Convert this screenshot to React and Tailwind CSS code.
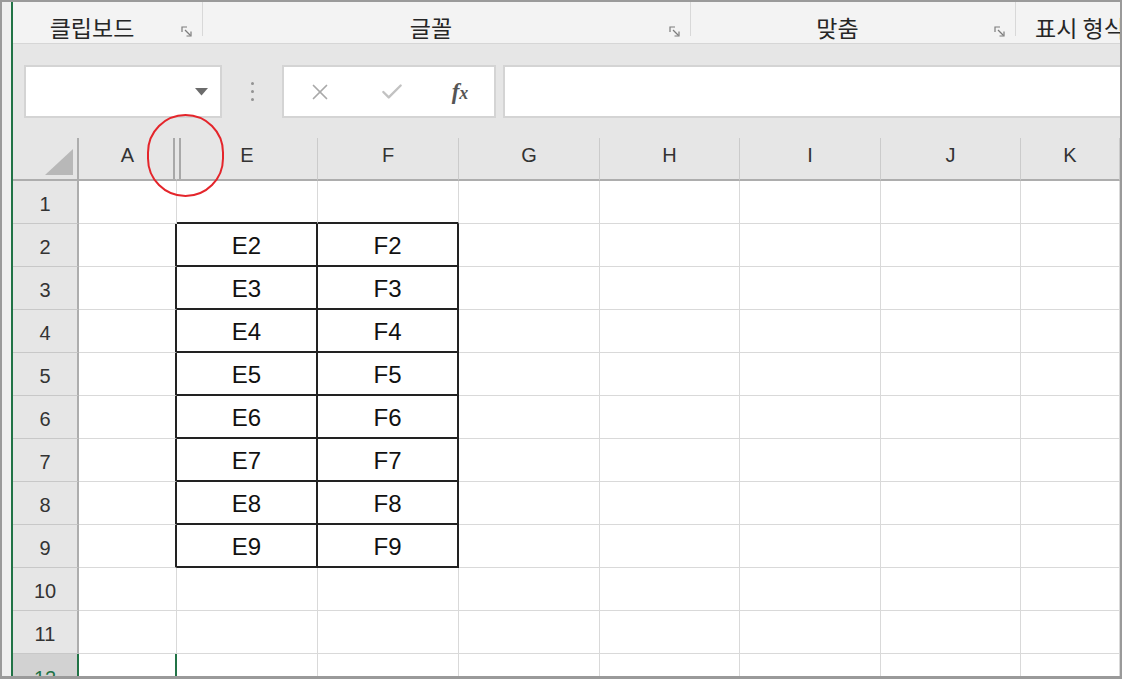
import React from 'react';
import { X, Check } from 'lucide-react';

const cols = [
  { key: 'A', label: 'A' },
  { key: 'E', label: 'E' },
  { key: 'F', label: 'F' },
  { key: 'G', label: 'G' },
  { key: 'H', label: 'H' },
  { key: 'I', label: 'I' },
  { key: 'J', label: 'J' },
  { key: 'K', label: 'K' },
];

const rows = [1, 2, 3, 4, 5, 6, 7, 8, 9, 10, 11, 12];

const gridCols = 'grid-cols-[66px_98px_141px_141px_141px_140px_141px_140px_1fr]';

function Launcher() {
  return (
    <svg width="11" height="11" viewBox="0 0 11 11" fill="none" stroke="#7c7c7c" strokeWidth="1.2">
      <path d="M1 6V1h5" />
      <path d="M4 4l5.5 5.5" />
      <path d="M10 5.5V10H5.5" />
    </svg>
  );
}

function RibbonGroup({ label, width, launcher = true }) {
  return (
    <div className={`flex h-full items-center pt-[9px] pr-[10px] ${width}`}>
      <span className="flex-1 text-center text-[23px] text-[#262626]">{label}</span>
      {launcher && (
        <span className="ml-[10px] mt-[8px] flex">
          <Launcher />
        </span>
      )}
    </div>
  );
}

function cellClass(col, row) {
  const inTable = row >= 2 && row <= 9;
  let cls = 'flex items-center justify-center pt-[3px] ';
  if ((col === 'E' || col === 'F') && inTable) {
    cls += 'border-r-2 border-b-2 border-[#222]';
  } else if ((col === 'E' || col === 'F') && row === 1) {
    cls += 'border-r border-r-[#d9d9d9] border-b-2 border-b-[#222]';
  } else if (col === 'A' && inTable) {
    cls += 'border-b border-b-[#d9d9d9] border-r-2 border-r-[#222]';
  } else if (col === 'A' && row === 12) {
    cls += 'border-b border-b-[#d9d9d9] border-r-2 border-r-[#217346]';
  } else {
    cls += 'border-r border-b border-[#d9d9d9]';
  }
  return cls;
}

export default function App() {
  return (
    <div className="relative flex h-[679px] w-[1122px] overflow-hidden border-x-2 border-t-2 border-b-[3px] border-[#9a9a9a] bg-white font-['Liberation_Sans','Noto_Sans_CJK_KR',sans-serif]">
      <div className="w-[9px] bg-[#efefef]" />
      <div className="w-[2px] bg-[#217346]" />

      <div className="flex min-w-0 flex-1 flex-col">
        {/* ribbon group labels */}
        <div className="flex h-[42px] shrink-0 items-start overflow-hidden border-b border-[#d6d6d6] bg-[#f3f3f3] font-['Noto_Sans_CJK_KR',sans-serif]">
          <RibbonGroup label="클립보드" width="w-[189px] shrink-0" />
          <div className="h-[34px] w-px shrink-0 bg-[#d8d8d8]" />
          <RibbonGroup label="글꼴" width="w-[487px] shrink-0" />
          <div className="h-[34px] w-px shrink-0 bg-[#d8d8d8]" />
          <RibbonGroup label="맞춤" width="w-[324px] shrink-0" />
          <div className="h-[34px] w-px shrink-0 bg-[#d8d8d8]" />
          <div className="flex h-full shrink-0 items-center whitespace-nowrap pl-[19px] pt-[9px] text-[23px] text-[#262626]">
            표시 형식
          </div>
        </div>

        {/* formula bar */}
        <div className="flex h-[94px] shrink-0 items-start bg-[#e6e6e6] pt-[21px]">
          <div className="ml-[11px] flex h-[53px] w-[198px] items-center justify-end border-2 border-[#d4d4d4] bg-white pr-[12px]">
            <svg width="13" height="8" viewBox="0 0 13 8">
              <path d="M0 0h13L6.5 7.5z" fill="#6b6b6b" />
            </svg>
          </div>
          <div className="flex h-[53px] w-[60px] flex-col items-center justify-center gap-[5px]">
            <span className="h-[3px] w-[3px] rounded-full bg-[#939393]" />
            <span className="h-[3px] w-[3px] rounded-full bg-[#939393]" />
            <span className="h-[3px] w-[3px] rounded-full bg-[#939393]" />
          </div>
          <div className="flex h-[53px] w-[214px] items-center border-2 border-[#d4d4d4] bg-white">
            <span className="flex w-[72px] justify-center">
              <X size={26} strokeWidth={1.6} color="#a9a9a9" />
            </span>
            <span className="flex w-[72px] justify-center">
              <Check size={26} strokeWidth={2.2} color="#c2c2c2" />
            </span>
            <span className="flex w-[64px] items-baseline justify-center font-['Liberation_Serif',serif] font-bold italic leading-none text-[#555]">
              <span className="text-[23px]">f</span>
              <span className="text-[18px]">x</span>
            </span>
          </div>
          <div className="ml-[7px] h-[53px] flex-1 border-y-2 border-l-2 border-[#d4d4d4] bg-white" />
        </div>

        {/* sheet */}
        <div className={`grid min-h-0 flex-1 auto-rows-[43px] ${gridCols} overflow-hidden`}>
          {/* corner */}
          <div className="flex items-end justify-end border-r-2 border-b-2 border-[#adadad] bg-[#e6e6e6] pr-[4px] pb-[4px]">
            <svg width="28" height="26" viewBox="0 0 28 26">
              <path d="M28 0V26H0z" fill="#b8b8b8" />
            </svg>
          </div>
          {cols.map((c) => (
            <div
              key={c.key}
              className="relative flex items-center justify-center border-r border-b-2 border-r-[#cbcbcb] border-b-[#adadad] bg-[#e6e6e6] pb-[7px] text-[20px] text-[#333]"
            >
              {c.label}
              {c.key === 'A' && (
                <span className="absolute top-0 right-[-5px] bottom-0 z-10 w-[8px] border-x-2 border-[#a8a8a8] bg-[#e6e6e6]" />
              )}
            </div>
          ))}

          {rows.map((r) => (
            <React.Fragment key={r}>
              <div
                className={
                  r === 12
                    ? 'flex items-start justify-center border-r-2 border-b border-r-[#217346] border-b-[#c8c8c8] bg-[#d2d2d2] pt-[9px] text-[20px] text-[#217346]'
                    : 'flex items-center justify-center border-r-2 border-b border-r-[#adadad] border-b-[#c8c8c8] bg-[#e6e6e6] pt-[3px] text-[20px] text-[#333]'
                }
              >
                {r}
              </div>
              {cols.map((c) => (
                <div key={c.key} className={`${cellClass(c.key, r)} text-[24px] text-[#111]`}>
                  {(c.key === 'E' || c.key === 'F') && r >= 2 && r <= 9 ? `${c.key}${r}` : ''}
                </div>
              ))}
            </React.Fragment>
          ))}
        </div>
      </div>

      {/* annotation */}
      <div className="absolute top-[112px] left-[145px] h-[83px] w-[77px] rounded-full border-2 border-[#e4252b]" />
    </div>
  );
}
